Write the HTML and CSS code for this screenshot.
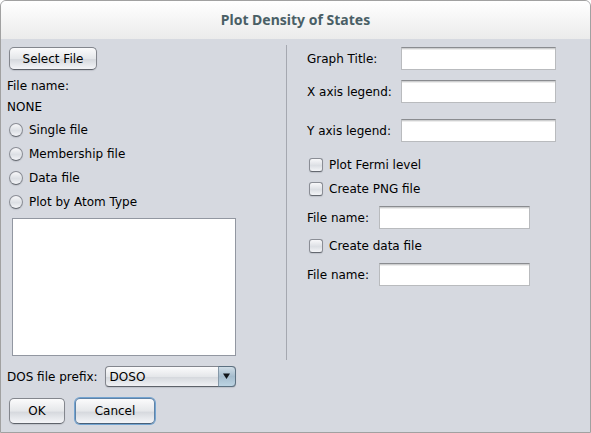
FILE: index.html
```html
<!DOCTYPE html>
<html lang="en">
<head>
<meta charset="utf-8">
<title>Plot Density of States</title>
<link rel="stylesheet" href="styles.css">
</head>
<body>
<form class="window">
  <header class="titlebar"><h1 class="title">Plot Density of States</h1></header>
  <div class="panels">
    <section class="source">
      <button class="button select-file" type="button">Select File</button>
      <p class="line">File name:</p>
      <p class="line">NONE</p>
      <label class="choice"><input class="radio" type="radio" name="source">Single file</label>
      <label class="choice"><input class="radio" type="radio" name="source">Membership file</label>
      <label class="choice"><input class="radio" type="radio" name="source">Data file</label>
      <label class="choice"><input class="radio" type="radio" name="source">Plot by Atom Type</label>
      <select class="list" size="6" aria-label="Atom types"></select>
    </section>
    <section class="output">
      <div class="field"><label class="name" for="graph-title">Graph Title:</label><input class="text" id="graph-title" type="text"></div>
      <div class="field"><label class="name" for="x-legend">X axis legend:</label><input class="text" id="x-legend" type="text"></div>
      <div class="field field-last"><label class="name" for="y-legend">Y axis legend:</label><input class="text" id="y-legend" type="text"></div>
      <label class="choice"><input class="check" type="checkbox">Plot Fermi level</label>
      <label class="choice"><input class="check" type="checkbox">Create PNG file</label>
      <div class="field field-file"><label class="name" for="png-name">File name:</label><input class="text" id="png-name" type="text"></div>
      <label class="choice"><input class="check" type="checkbox">Create data file</label>
      <div class="field field-file"><label class="name" for="data-name">File name:</label><input class="text" id="data-name" type="text"></div>
    </section>
  </div>
  <div class="prefix">
    <label for="prefix">DOS file prefix:</label>
    <select class="combo" id="prefix"><option>DOSO</option></select>
    <svg class="arrow" viewBox="0 0 18 21" aria-hidden="true">
      <defs><linearGradient id="blue" x1="0" y1="0" x2="0" y2="1"><stop offset="0" stop-color="#d2dfe8"/><stop offset=".5" stop-color="#a5bccd"/><stop offset="1" stop-color="#bdd5e4"/></linearGradient></defs>
      <path d="M.5.5H14Q17.500.5 17.500 4V17Q17.500 20.500 14 20.500H.5Z" fill="url(#blue)" stroke="#5c7080"/>
      <path d="M.5 1V20" stroke="#8598a8"/>
      <path d="M5 7.500H12L8.500 13Z" fill="#101418"/>
    </svg>
  </div>
  <footer class="actions">
    <button class="button ok" type="button">OK</button>
    <button class="button cancel" type="button">Cancel</button>
  </footer>
</form>
</body>
</html>
```
FILE: styles.css
```css
* { box-sizing: border-box; }

body {
  margin: 0;
  background: #fff;
  color: #000;
  font: 12px/20px "DejaVu Sans", sans-serif;
}

.window {
  min-height: 100vh;
  border: 1px solid #a1a1a1;
  border-radius: 6px 6px 0 0;
  background: #d6d9e0;
  overflow: hidden;
}

.titlebar {
  display: flex;
  align-items: center;
  justify-content: center;
  height: 38px;
  background: linear-gradient(#fff, #ebebeb);
}

.title {
  margin: 0;
  color: #4a5f66;
  font: bold 14px/20px "Noto Sans", sans-serif;
}

.panels {
  display: grid;
  grid-template-columns: 285px minmax(0, 1fr);
  padding-top: 6px;
}

.source {
  display: flex;
  flex-direction: column;
  padding: 2px 50px 4px 6px;
}

.output {
  padding: 2px 34px 0 20px;
  border-left: 1px solid #a5a8b0;
}

.button {
  padding: 0;
  border: 1px solid #83868d;
  border-bottom-color: #5e626a;
  border-radius: 5px;
  background: linear-gradient(#fbfbfc, #e5e7ea 50%, #d6d9de 55%, #f4f5f8);
  box-shadow: 0 1px 1px #bfc2ca;
  color: #000;
  font: inherit;
}

.select-file {
  width: 88px;
  height: 23px;
  margin: 0 0 6px 2px;
}

.line { margin: 0; }

.line + .line { margin: 1px 0; }

.choice {
  display: flex;
  align-items: center;
  gap: 6px;
  height: 24px;
  padding-left: 2px;
}

.radio,
.check {
  appearance: none;
  width: 14px;
  height: 14px;
  margin: 0;
  border: 1px solid #8a8d95;
  border-bottom-color: #646870;
  border-radius: 3px;
  background: linear-gradient(#f8f8fa, #dcdfe4 55%, #f4f5f8);
  box-shadow: 0 1px 1px #bfc2ca;
}

.radio { border-radius: 50%; }

.list {
  height: 138px;
  margin: 4px 0 0 5px;
  border: 1px solid #9297a1;
  border-radius: 0;
  background: #fff;
}

.field {
  display: flex;
  align-items: center;
  height: 23px;
  margin-bottom: 10px;
}

.field:has(+ .field-last) { margin-bottom: 16px; }

.field-last { margin-bottom: 11px; }

.name { width: 94px; }

.text {
  flex: 1;
  min-width: 0;
  height: 23px;
  padding: 0 6px;
  border: 1px solid #b9bbbe;
  border-top-color: #8a8c90;
  border-radius: 0;
  background: #fff;
  box-shadow: inset 0 1px #cecfd0, inset 0 2px #ececec;
  font: inherit;
}

.field-file {
  margin: 5px 26px 5px 0;
}

.field-file .name { width: 72px; }

.prefix {
  display: flex;
  align-items: center;
  height: 21px;
  margin: 6px 0 11px 6px;
}

.combo {
  appearance: none;
  width: 131px;
  height: 21px;
  margin-left: 7px;
  padding: 0 22px 0 4px;
  border: 1px solid #83868d;
  border-bottom-color: #5e626a;
  border-radius: 4px;
  background: linear-gradient(#fbfbfc, #e5e7ea 50%, #d6d9de 55%, #f0f1f4);
  box-shadow: 0 1px 1px #bfc2ca;
  color: #000;
  font: inherit;
}

.arrow {
  width: 18px;
  height: 21px;
  margin-left: -18px;
  pointer-events: none;
}

.actions {
  display: flex;
  gap: 10px;
  padding: 0 8px 7px;
}

.actions .button { height: 26px; }

.ok { width: 56px; }

.cancel {
  width: 80px;
  border-color: #5f83a8;
  border-bottom-color: #48607a;
  box-shadow: 0 0 0 1px #73a4d1;
}
```
